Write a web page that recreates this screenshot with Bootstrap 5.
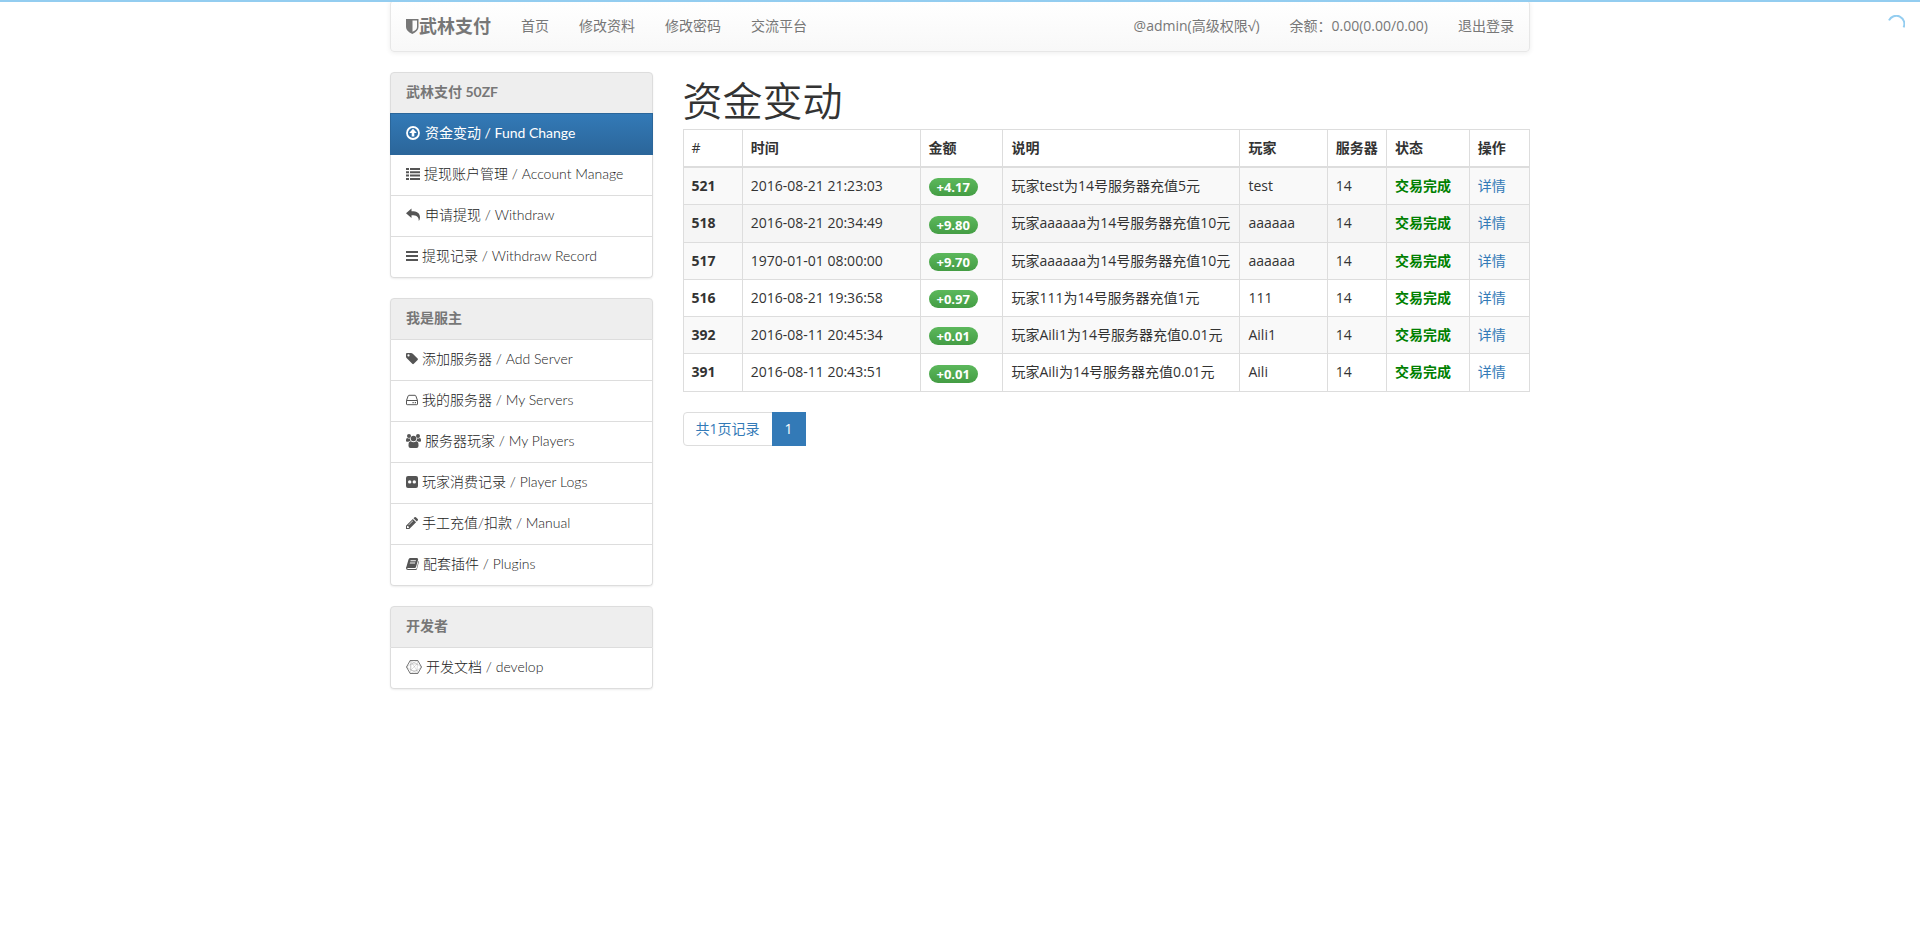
<!DOCTYPE html>
<html lang="zh-CN">
<head>
<meta charset="utf-8">
<meta name="viewport" content="width=device-width, initial-scale=1">
<title>资金变动 - 武林支付</title>
<link rel="stylesheet" href="https://cdn.jsdelivr.net/npm/bootstrap@5.3.0/dist/css/bootstrap.min.css">
<style>
body{font-family:"Open Sans","Noto Sans CJK SC",sans-serif;font-size:14px;line-height:20px;color:#333;background:#fff}
a{color:#337ab7}
.container{--bs-gutter-x:30px;max-width:1170px}
.container>.row{--bs-gutter-x:30px}
.load-bar{height:2px;background:#93cdf0;z-index:1050}
.load-spin{top:15px;right:15px;z-index:1050}
.site-nav{min-height:52px;padding:0;border:1px solid #e7e7e7;border-radius:4px;background:linear-gradient(#fff,#f8f8f8);box-shadow:0 1px 5px rgba(0,0,0,.075);margin-bottom:20px}
.site-nav .navbar-brand{padding:15px;margin:0;font-size:18px;line-height:20px;font-weight:700;color:#777;display:flex;align-items:center}
.site-nav .nav-link{padding:15px!important;color:#777;line-height:20px;white-space:nowrap}
.side-menu{font-family:Lato,"Noto Sans CJK SC",sans-serif;border-radius:4px;box-shadow:0 1px 2px rgba(0,0,0,.075);margin-bottom:20px;--bs-list-group-border-color:#ddd;--bs-list-group-border-radius:4px}
.side-menu .list-group-item{padding:9px 15px 11px;color:#222;font-weight:300;display:flex;align-items:center;gap:4px;white-space:nowrap}
.side-menu .menu-title{background:#eee;color:#777;font-weight:700}
.side-menu .list-group-item.active{color:#fff;font-weight:400;background:linear-gradient(#337ab7,#2b669a);border-color:#2b669a}
.side-menu svg{flex:none;color:#555;fill:currentColor}
.side-menu .active svg{color:#fff}
.page-title{font-size:40px;line-height:44px;font-weight:350;margin:7px 0 6px}
.fund-table{--bs-table-color:#333;--bs-table-striped-color:#333;--bs-table-striped-bg:#f9f9f9;--bs-table-hover-bg:#f5f5f5;border-color:#ddd;margin-bottom:20px;color:#333;white-space:nowrap}
.fund-table thead th{border-bottom-width:2px}
.fund-table tbody tr.current>*{--bs-table-accent-bg:#f5f5f5;--bs-table-bg-type:#f5f5f5}
.fund-table a{text-decoration:none}
.amount{font-size:13px;line-height:12px;padding:3px 8px;border-radius:10px;background:linear-gradient(#5cb85c,#449d44);vertical-align:middle}
.fund-table tbody .done{color:green;font-weight:700}
.pagination{--bs-pagination-font-size:14px;--bs-pagination-padding-x:12px;--bs-pagination-padding-y:6px;--bs-pagination-color:#337ab7;--bs-pagination-border-color:#ddd;--bs-pagination-border-radius:4px;--bs-pagination-active-bg:#337ab7;--bs-pagination-active-border-color:#337ab7}
.pagination .active .page-link{border-radius:0}
</style>
</head>
<body>
<div class="load-bar fixed-top"></div>
<div class="load-spin position-fixed d-flex" role="status" aria-label="加载中">
<svg width="18" height="18" viewBox="0 0 18 18" fill="none" stroke="#93cdf0" stroke-width="2"><path d="M2 5.400A8 8 0 0 1 16.600 12.400"/></svg>
</div>
<div class="container">
  <nav class="navbar navbar-expand-md site-nav">
    <a class="navbar-brand" href="#"><svg width="13" height="16" viewBox="0 0 13 16" fill="#777" aria-hidden="true"><path fill-rule="evenodd" d="M0 1H12.500V9Q12.500 13 6.300 16Q0 13 0 9ZM6.500 2.500V13.800Q11 12 11 9V2.500Z"/></svg>武林支付</a>
    <button class="navbar-toggler me-2" type="button" data-bs-toggle="collapse" data-bs-target="#mainNav" aria-label="菜单"><span class="navbar-toggler-icon"></span></button>
    <div class="collapse navbar-collapse" id="mainNav">
      <ul class="navbar-nav me-auto">
        <li class="nav-item"><a class="nav-link" href="#">首页</a></li>
        <li class="nav-item"><a class="nav-link" href="#">修改资料</a></li>
        <li class="nav-item"><a class="nav-link" href="#">修改密码</a></li>
        <li class="nav-item"><a class="nav-link" href="#">交流平台</a></li>
      </ul>
      <ul class="navbar-nav">
        <li class="nav-item"><a class="nav-link" href="#">@admin(高级权限√)</a></li>
        <li class="nav-item"><a class="nav-link" href="#">余额：0.00(0.00/0.00)</a></li>
        <li class="nav-item"><a class="nav-link" href="#">退出登录</a></li>
      </ul>
    </div>
  </nav>
  <div class="row">
    <aside class="col-md-3">
      <div class="list-group side-menu">
        <div class="list-group-item menu-title">武林支付 50ZF</div>
        <a class="list-group-item active" href="#"><svg width="15" height="14" viewBox="0 0 15 14"><circle cx="7" cy="7" r="6" fill="none" stroke="currentColor" stroke-width="1.800"/><path d="M7 2.800L10.800 7H8.300V10.600H5.700V7H3.200Z"/></svg>资金变动 / Fund Change</a>
        <a class="list-group-item" href="#"><svg width="14" height="14" viewBox="0 0 14 14"><path d="M0 1H3V3H0ZM4 1H14V3H4ZM0 4.300H3V6.300H0ZM4 4.300H14V6.300H4ZM0 7.600H3V9.600H0ZM4 7.600H14V9.600H4ZM0 11H3V13H0ZM4 11H14V13H4Z"/></svg>提现账户管理 / Account Manage</a>
        <a class="list-group-item" href="#"><svg width="15" height="14" viewBox="0 0 15 14"><path d="M0 5.200L5.500.5V3.200C11 3.200 14 5 14 9.500Q14 11.500 12.800 13C12.800 8.500 10.500 7.300 5.500 7.300V10Z"/></svg>申请提现 / Withdraw</a>
        <a class="list-group-item" href="#"><svg width="12" height="14" viewBox="0 0 12 14"><path d="M0 2H12V4H0ZM0 6H12V8H0ZM0 10H12V12H0Z"/></svg>提现记录 / Withdraw Record</a>
      </div>
      <div class="list-group side-menu">
        <div class="list-group-item menu-title">我是服主</div>
        <a class="list-group-item" href="#"><svg width="12" height="14" viewBox="0 0 12 14"><path fill-rule="evenodd" d="M0 2Q0 1 1 1H5Q6 1 6.800 1.800L11.600 6.600Q12.300 7.300 11.600 8L7.800 11.800Q7 12.500 6.300 11.800L.8 6.300Q0 5.500 0 4.800ZM2.500 2.300A1.100 1.100 0 1 0 2.500 4.500A1.100 1.100 0 1 0 2.500 2.300Z"/></svg>添加服务器 / Add Server</a>
        <a class="list-group-item" href="#"><svg width="12" height="14" viewBox="0 0 12 14"><path d="M.5 7.500L2.200 2.800Q2.400 2.300 3 2.300H9Q9.600 2.300 9.800 2.800L11.500 7.500V11Q11.500 11.700 10.800 11.700H1.200Q.5 11.700 .5 11ZM.5 7.500H11.500" fill="none" stroke="currentColor"/><path d="M6.500 9H7.700V10.200H6.500ZM8.800 9H10V10.200H8.800Z"/></svg>我的服务器 / My Servers</a>
        <a class="list-group-item" href="#"><svg width="15" height="14" viewBox="0 0 15 14"><circle cx="3" cy="2" r="2"/><circle cx="12" cy="2" r="2"/><path d="M0 7V6Q0 4 1.400 4Q2.500 4.900 4 4.500Q3.800 6 4.700 7H3.500Q3 7 2.500 7.800H1Q0 7.800 0 7ZM15 7V6Q15 4 13.600 4Q12.500 4.900 11 4.500Q11.200 6 10.300 7H11.500Q12 7 12.500 7.800H14Q15 7.800 15 7Z"/><circle cx="7.500" cy="4.500" r="2.800"/><path d="M2.500 12V11Q2.500 7.300 4.700 7.300Q7.500 9.300 10.300 7.300Q12.500 7.300 12.500 11V12Q12.500 14 10.500 14H4.500Q2.500 14 2.500 12Z"/></svg>服务器玩家 / My Players</a>
        <a class="list-group-item" href="#"><svg width="12" height="14" viewBox="0 0 12 14"><path fill-rule="evenodd" d="M2 1H10Q12 1 12 3V11Q12 13 10 13H2Q0 13 0 11V3Q0 1 2 1ZM3.700 5.200A1.700 1.700 0 1 0 3.700 8.600A1.700 1.700 0 1 0 3.700 5.200ZM8.300 5.200A1.700 1.700 0 1 0 8.300 8.600A1.700 1.700 0 1 0 8.300 5.200Z"/></svg>玩家消费记录 / Player Logs</a>
        <a class="list-group-item" href="#"><svg width="12" height="14" viewBox="0 0 12 14"><path fill-rule="evenodd" d="M0 13V9.700L6.800 2.900L10.100 6.200L3.300 13ZM1 10.500V12H2.500L3.200 11.200L1.700 9.700ZM2.700 9.300L7 5L6.600 4.600L2.300 8.900ZM7.500 2.200L8.500 1.200Q9.200.6 9.900 1.200L11.700 3.100Q12.400 3.800 11.700 4.500L10.800 5.500Z"/></svg>手工充值/扣款 / Manual</a>
        <a class="list-group-item" href="#"><svg width="13" height="14" viewBox="0 0 13 14"><path fill-rule="evenodd" d="M4 1H11Q12.500 1.500 12 3L10 10Q9.700 11 8.800 11H2Q1.200 11 1.200 11.500Q1.400 12 2 12H9.700Q10.500 12 10.800 11L12.500 4Q13.200 4.500 12.800 5.300L11 12Q10.700 13 9.700 13H2Q0 13 0 11Q0 10 .5 9.500L2.500 2.500Q3 1 4 1ZM4.600 3.200L4.300 4.200H9.700L10 3.200ZM4 5.500L3.700 6.500H9L9.300 5.500Z"/></svg>配套插件 / Plugins</a>
      </div>
      <div class="list-group side-menu">
        <div class="list-group-item menu-title">开发者</div>
        <a class="list-group-item" href="#"><svg width="16" height="14" viewBox="0 0 16 14"><g fill="none" stroke="currentColor" stroke-linejoin="round"><path stroke-width=".8" d="M4.200.5H11.800L15.500 7L11.800 13.500H4.200L.5 7Z"/><path stroke-width=".2" d="M4.200.5L11 10.500L15.500 7L11 4L4.200 .5L5 10L.5 7L5 4L11.800.5L11 10.500L4.200 13.500L5 4L11 4L5 10L11.800 13.500L11 10.500H5"/></g></svg>开发文档 / develop</a>
      </div>
    </aside>
    <main class="col-md-9">
      <h1 class="page-title">资金变动</h1>
      <div class="table-responsive-md">
      <table class="table table-bordered table-striped table-hover fund-table">
        <colgroup><col style="width:7%"><col style="width:21%"><col style="width:9.8%"><col style="width:28%"><col style="width:10.3%"><col style="width:7%"><col style="width:9.8%"><col style="width:7.1%"></colgroup>
        <thead><tr><th class="fw-normal">#</th><th>时间</th><th>金额</th><th>说明</th><th>玩家</th><th>服务器</th><th>状态</th><th>操作</th></tr></thead>
        <tbody>
          <tr><th scope="row">521</th><td>2016-08-21 21:23:03</td><td><span class="badge amount">+4.17</span></td><td>玩家test为14号服务器充值5元</td><td>test</td><td>14</td><td><span class="done">交易完成</span></td><td><a href="#">详情</a></td></tr>
          <tr class="current"><th scope="row">518</th><td>2016-08-21 20:34:49</td><td><span class="badge amount">+9.80</span></td><td>玩家aaaaaa为14号服务器充值10元</td><td>aaaaaa</td><td>14</td><td><span class="done">交易完成</span></td><td><a href="#">详情</a></td></tr>
          <tr><th scope="row">517</th><td>1970-01-01 08:00:00</td><td><span class="badge amount">+9.70</span></td><td>玩家aaaaaa为14号服务器充值10元</td><td>aaaaaa</td><td>14</td><td><span class="done">交易完成</span></td><td><a href="#">详情</a></td></tr>
          <tr><th scope="row">516</th><td>2016-08-21 19:36:58</td><td><span class="badge amount">+0.97</span></td><td>玩家111为14号服务器充值1元</td><td>111</td><td>14</td><td><span class="done">交易完成</span></td><td><a href="#">详情</a></td></tr>
          <tr><th scope="row">392</th><td>2016-08-11 20:45:34</td><td><span class="badge amount">+0.01</span></td><td>玩家Aili1为14号服务器充值0.01元</td><td>Aili1</td><td>14</td><td><span class="done">交易完成</span></td><td><a href="#">详情</a></td></tr>
          <tr><th scope="row">391</th><td>2016-08-11 20:43:51</td><td><span class="badge amount">+0.01</span></td><td>玩家Aili为14号服务器充值0.01元</td><td>Aili</td><td>14</td><td><span class="done">交易完成</span></td><td><a href="#">详情</a></td></tr>
        </tbody>
      </table>
      </div>
      <nav aria-label="分页">
        <ul class="pagination">
          <li class="page-item"><a class="page-link" href="#">共1页记录</a></li>
          <li class="page-item active" aria-current="page"><a class="page-link" href="#">1</a></li>
        </ul>
      </nav>
    </main>
  </div>
</div>
<script src="https://cdn.jsdelivr.net/npm/bootstrap@5.3.0/dist/js/bootstrap.bundle.min.js"></script>
</body>
</html>
